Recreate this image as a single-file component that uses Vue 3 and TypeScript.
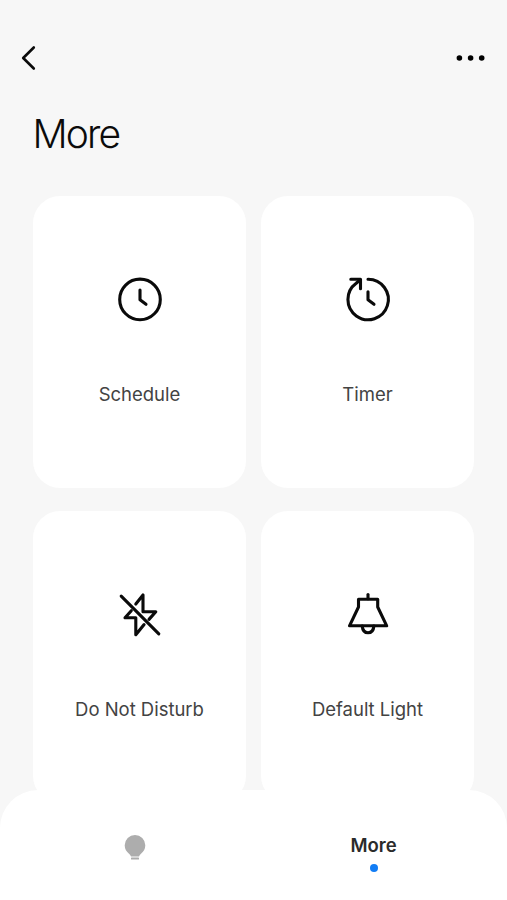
<script setup lang="ts">
type IconName = 'schedule' | 'timer' | 'dnd' | 'light'

interface Feature {
  icon: IconName
  label: string
}

const features: Feature[] = [
  { icon: 'schedule', label: 'Schedule' },
  { icon: 'timer', label: 'Timer' },
  { icon: 'dnd', label: 'Do Not Disturb' },
  { icon: 'light', label: 'Default Light' },
]
</script>

<template>
  <div class="screen">
    <header class="topbar">
      <button class="icon-button" aria-label="Back">
        <svg width="16" height="26" viewBox="0 0 16 26">
          <path class="stroke chevron" d="M12.8 2.5 2.200 13l10.600 10.5" />
        </svg>
      </button>
      <button class="icon-button" aria-label="Options">
        <svg width="30" height="8" viewBox="0 0 30 8">
          <circle cx="3.4" cy="4" r="2.8" />
          <circle cx="14.6" cy="4" r="2.8" />
          <circle cx="25.7" cy="4" r="2.8" />
        </svg>
      </button>
    </header>

    <h1 class="title">More</h1>

    <main class="grid">
      <section v-for="feature in features" :key="feature.icon" class="card">
        <svg class="card-icon" width="80" height="80" viewBox="0 0 80 80">
          <g v-if="feature.icon === 'schedule'" class="stroke">
            <circle cx="40" cy="39.4" r="20.3" />
            <path d="M40 30v9.7l6 4.6" />
          </g>
          <g v-else-if="feature.icon === 'timer'" class="stroke">
            <path d="M40 19.3A20.2 20.2 0 1 1 28.2 23.2L32 20" />
            <path d="M22.8 19.3h9.7v9.4" />
            <path d="M40 31.7v8l6 4.6" />
          </g>
          <g v-else-if="feature.icon === 'dnd'" class="stroke">
            <path d="M21.2 21.2 58.8 58.8" />
            <path d="M35.8 29 43 20v16.7h12.800l-6.800 7.700" />
            <path d="M31.3 35.7 25 42.8h10.800v17l8.300-10.200" />
          </g>
          <g v-else class="stroke">
            <path d="M40 19.6v4.2" />
            <path d="M30.5 24.2h19.2V32l9 18.8H21.5l9-18.8Z" />
            <path d="M34.2 51c.4 4.4 2.7 6.8 5.8 6.8s5.500-2.400 5.900-6.800" />
          </g>
        </svg>
        <span class="card-label">{{ feature.label }}</span>
      </section>
    </main>

    <nav class="tabs">
      <button class="tab" aria-label="Light">
        <svg width="22" height="28" viewBox="0 0 22 28">
          <path class="bulb" d="M11 1A10.300 10.300 0 0 1 21.300 11.300C21.300 15.400 19.500 17.400 17 19.700Q15.600 21 15 22.500H7Q6.400 21 5 19.700C2.500 17.400 .700 15.400 .700 11.300A10.300 10.300 0 0 1 11 1Z" />
          <rect class="bulb" x="7" y="23.600" width="8" height="2" rx=".6" />
        </svg>
      </button>
      <button class="tab active">
        <span class="tab-label">More</span>
        <span class="dot"></span>
      </button>
    </nav>
  </div>
</template>

<style>
body {
  background: #f7f7f7;
}
</style>

<style scoped>
.screen {
  display: flex;
  flex-direction: column;
  box-sizing: border-box;
  position: relative;
  height: 900px;
  overflow: hidden;
  background: #f7f7f7;
  color: #0b0b0b;
  font-family: Inter, 'Liberation Sans', sans-serif;
}

button {
  padding: 0;
  border: 0;
  background: none;
  font: inherit;
  color: inherit;
}

.topbar {
  display: flex;
  flex: none;
  align-items: center;
  justify-content: space-between;
  height: 115px;
  box-sizing: border-box;
  padding: 0 21px;
}

.icon-button {
  display: flex;
}

.stroke {
  fill: none;
  stroke: #0a0a0a;
  stroke-width: 3.1;
  stroke-linecap: round;
  stroke-linejoin: round;
}

.chevron {
  stroke-width: 2.6;
}

.title {
  flex: none;
  height: 81px;
  margin: 0 0 0 32.5px;
  line-height: 38px;
  font-size: 39px;
  font-weight: 300;
  letter-spacing: -1.9px;
}

.grid {
  display: grid;
  flex: none;
  grid-template-columns: repeat(2, 213px);
  grid-auto-rows: 292px;
  gap: 23px 15px;
  padding-left: 33px;
}

.card {
  display: flex;
  flex-direction: column;
  align-items: center;
  box-sizing: border-box;
  padding-top: 64px;
  border-radius: 27px;
  background: #fff;
}

.card-icon {
  display: block;
  margin-left: 1px;
}

.card-label {
  margin-top: 42px;
  line-height: 24px;
  font-size: 18.5px;
  letter-spacing: -0.02px;
  color: #434343;
}

.tabs {
  display: flex;
  position: absolute;
  right: 0;
  bottom: 0;
  left: 0;
  height: 110px;
  box-sizing: border-box;
  padding: 0 14px 0 15px;
  border-radius: 38px 38px 0 0;
  background: #fff;
}

.tab {
  display: flex;
  flex: 1;
  flex-direction: column;
  align-items: center;
  padding-top: 44px;
}

.tab.active {
  padding-top: 43px;
}

.tab-label {
  line-height: 24px;
  font-size: 18.5px;
  font-weight: 600;
  color: #2b2b2b;
}

.dot {
  width: 8px;
  height: 8px;
  margin-top: 7px;
  border-radius: 50%;
  background: #127df5;
}

.bulb {
  fill: #adadad;
}
</style>
